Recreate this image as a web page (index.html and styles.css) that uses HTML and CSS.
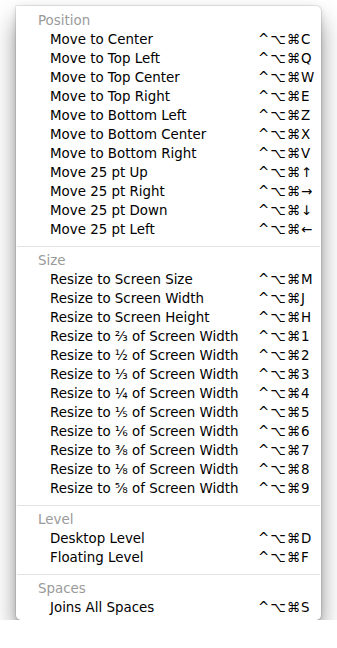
FILE: index.html
```html
<!DOCTYPE html>
<html>
<head>
  <meta charset="utf-8">
  <title>Window menu</title>
  <link rel="stylesheet" href="styles.css">
</head>
<body>
  <div class="menu">
    <div class="menu__header">Position</div>
    <div class="menu__item"><span>Move to Center</span><span class="menu__key">^⌥⌘C</span></div>
    <div class="menu__item"><span>Move to Top Left</span><span class="menu__key">^⌥⌘Q</span></div>
    <div class="menu__item"><span>Move to Top Center</span><span class="menu__key">^⌥⌘W</span></div>
    <div class="menu__item"><span>Move to Top Right</span><span class="menu__key">^⌥⌘E</span></div>
    <div class="menu__item"><span>Move to Bottom Left</span><span class="menu__key">^⌥⌘Z</span></div>
    <div class="menu__item"><span>Move to Bottom Center</span><span class="menu__key">^⌥⌘X</span></div>
    <div class="menu__item"><span>Move to Bottom Right</span><span class="menu__key">^⌥⌘V</span></div>
    <div class="menu__item"><span>Move 25 pt Up</span><span class="menu__key">^⌥⌘↑</span></div>
    <div class="menu__item"><span>Move 25 pt Right</span><span class="menu__key">^⌥⌘→</span></div>
    <div class="menu__item"><span>Move 25 pt Down</span><span class="menu__key">^⌥⌘↓</span></div>
    <div class="menu__item"><span>Move 25 pt Left</span><span class="menu__key">^⌥⌘←</span></div>

    <div class="menu__sep"></div>

    <div class="menu__header">Size</div>
    <div class="menu__item"><span>Resize to Screen Size</span><span class="menu__key">^⌥⌘M</span></div>
    <div class="menu__item"><span>Resize to Screen Width</span><span class="menu__key">^⌥⌘J</span></div>
    <div class="menu__item"><span>Resize to Screen Height</span><span class="menu__key">^⌥⌘H</span></div>
    <div class="menu__item"><span>Resize to ⅔ of Screen Width</span><span class="menu__key">^⌥⌘1</span></div>
    <div class="menu__item"><span>Resize to ½ of Screen Width</span><span class="menu__key">^⌥⌘2</span></div>
    <div class="menu__item"><span>Resize to ⅓ of Screen Width</span><span class="menu__key">^⌥⌘3</span></div>
    <div class="menu__item"><span>Resize to ¼ of Screen Width</span><span class="menu__key">^⌥⌘4</span></div>
    <div class="menu__item"><span>Resize to ⅕ of Screen Width</span><span class="menu__key">^⌥⌘5</span></div>
    <div class="menu__item"><span>Resize to ⅙ of Screen Width</span><span class="menu__key">^⌥⌘6</span></div>
    <div class="menu__item"><span>Resize to ⅜ of Screen Width</span><span class="menu__key">^⌥⌘7</span></div>
    <div class="menu__item"><span>Resize to ⅛ of Screen Width</span><span class="menu__key">^⌥⌘8</span></div>
    <div class="menu__item"><span>Resize to ⅝ of Screen Width</span><span class="menu__key">^⌥⌘9</span></div>

    <div class="menu__sep"></div>

    <div class="menu__header">Level</div>
    <div class="menu__item"><span>Desktop Level</span><span class="menu__key">^⌥⌘D</span></div>
    <div class="menu__item"><span>Floating Level</span><span class="menu__key">^⌥⌘F</span></div>

    <div class="menu__sep"></div>

    <div class="menu__header">Spaces</div>
    <div class="menu__item"><span>Joins All Spaces</span><span class="menu__key">^⌥⌘S</span></div>
  </div>
</body>
</html>
```

FILE: styles.css
```css
* {
  box-sizing: border-box;
}

body {
  margin: 0px;
  padding: 6px 0 0 16px;
  background: #ffffff;
  font-family: "DejaVu Sans", "Liberation Sans", sans-serif;
  font-size: 13.4px;
  color: #000000;
}

.menu {
  width: 305px;
  padding: 5px 0 3px;
  background: #ffffff;
  border-radius: 1px 5px 5px 5px;
  box-shadow: 0 0 0 1px rgba(0, 0, 0, 0.08),
    0 2px 6px rgba(0, 0, 0, 0.12),
    0 14px 24px rgba(0, 0, 0, 0.42);
}

.menu__header {
  height: 19px;
  line-height: 19px;
  padding-left: 22px;
  color: #9a9a9a;
}

.menu__item {
  display: grid;
  grid-template-columns: 208px 1fr;
  height: 19px;
  line-height: 19px;
  padding-left: 34px;
  white-space: nowrap;
}

.menu__key {
  letter-spacing: 1px;
}

.menu__sep {
  height: 1px;
  margin: 7px 1px 4px;
  background: #e4e4e4;
}
```
